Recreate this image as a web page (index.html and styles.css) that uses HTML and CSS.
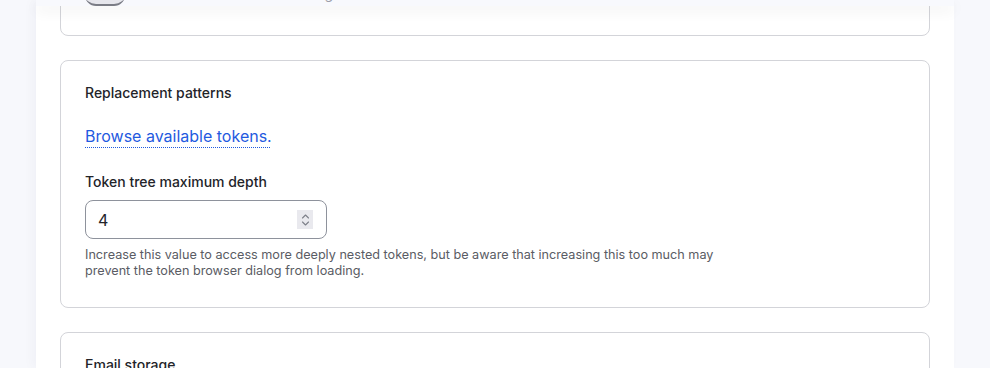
FILE: index.html
```html
<!DOCTYPE html>
<html lang="en">
<head>
<meta charset="utf-8">
<title>Settings</title>
<link rel="stylesheet" href="styles.css">
</head>
<body>
<div class="page">
  <div class="sticky">
    <div class="sticky-inner">
      <span class="toggle"></span>
      <span class="sticky-text">Enable log</span>
    </div>
  </div>
  <main class="panel">
    <section class="card card-top"></section>
    <section class="card">
      <h3 class="card-title">Replacement patterns</h3>
      <a class="token-link" href="#">Browse available tokens.</a>
      <div class="field">
        <label class="label" for="depth">Token tree maximum depth</label>
        <div class="number">
          <input id="depth" class="number-input" type="text" value="4">
          <span class="spinner">
            <svg width="9" height="14" viewBox="0 0 9 14"><path d="M1.5 5 L4.5 2 L7.5 5" fill="none" stroke="#7d808a" stroke-width="1.1" stroke-linecap="round" stroke-linejoin="round"/><path d="M1.5 9 L4.5 12 L7.5 9" fill="none" stroke="#7d808a" stroke-width="1.1" stroke-linecap="round" stroke-linejoin="round"/></svg>
          </span>
        </div>
        <p class="description">Increase this value to access more deeply nested tokens, but be aware that increasing this too much may prevent the token browser dialog from loading.</p>
      </div>
    </section>
    <section class="card">
      <h3 class="card-title">Email storage</h3>
    </section>
  </main>
</div>
</body>
</html>
```

FILE: styles.css
```css
html, body {
  margin: 0;
  padding: 0;
  height: 100%;
  overflow: hidden;
}
body {
  background: #f7f8fc;
  font-family: Inter, "Noto Sans", sans-serif;
  color: #232429;
}
.page {
  position: relative;
  margin-left: 36px;
  width: 918px;
  height: 100%;
  background: #ffffff;
  box-shadow: -4px 0 10px rgba(30, 40, 80, 0.03);
}
.sticky {
  position: absolute;
  top: 0;
  left: 0;
  right: 0;
  height: 6px;
  overflow: hidden;
  background: #f8f9fd;
  box-shadow: 0 5px 14px rgba(0, 0, 0, 0.07);
  z-index: 5;
}
.sticky-inner {
  display: flex;
  align-items: flex-end;
  gap: 14px;
  height: 6px;
  padding-left: 49px;
}
.toggle {
  flex: none;
  display: block;
  width: 40px;
  height: 22px;
  border-radius: 11px;
  background: #e6e6ec;
  border-bottom: 2px solid #7a7c85;
  box-sizing: border-box;
}
.sticky-text {
  display: block;
  font-size: 14px;
  line-height: 20px;
  margin-bottom: 2px;
  color: #9b9ea8;
  padding-left: 125px;
}
.panel {
  display: flex;
  flex-direction: column;
  gap: 24px;
  padding: 0 24px;
}
.card {
  border: 1px solid #d3d4d9;
  border-radius: 8px;
  padding: 22px 24px 28px;
  box-sizing: border-box;
}
.card-top {
  margin-top: -40px;
  height: 76px;
  padding: 0;
}
.card-title {
  margin: 0;
  font-size: 14px;
  line-height: 20px;
  font-weight: 500;
  color: #232429;
}
.token-link {
  display: block;
  width: max-content;
  margin-top: 21px;
  font-size: 16px;
  line-height: 24px;
  color: #1f5ae0;
  text-decoration: underline dotted;
  text-decoration-thickness: 1px;
  text-underline-offset: 5px;
}
.field {
  margin-top: 24px;
}
.label {
  display: block;
  font-size: 14px;
  line-height: 20px;
  font-weight: 500;
  color: #232429;
}
.number {
  display: flex;
  align-items: center;
  width: 242px;
  height: 39px;
  margin-top: 8px;
  border: 1px solid #8e929c;
  border-radius: 8px;
  box-sizing: border-box;
  padding: 0 13px 0 12px;
  background: #fff;
}
.number-input {
  flex: 1;
  min-width: 0;
  border: 0;
  outline: 0;
  padding: 0;
  font-family: inherit;
  font-size: 16px;
  line-height: 24px;
  color: #232429;
  background: transparent;
}
.spinner {
  flex: none;
  display: flex;
  align-items: center;
  justify-content: center;
  width: 16px;
  height: 19px;
  background: #e9e9ee;
}
.description {
  margin: 8px 0 0;
  max-width: 660px;
  font-size: 12.65px;
  line-height: 16px;
  color: #5a5c64;
}
```
